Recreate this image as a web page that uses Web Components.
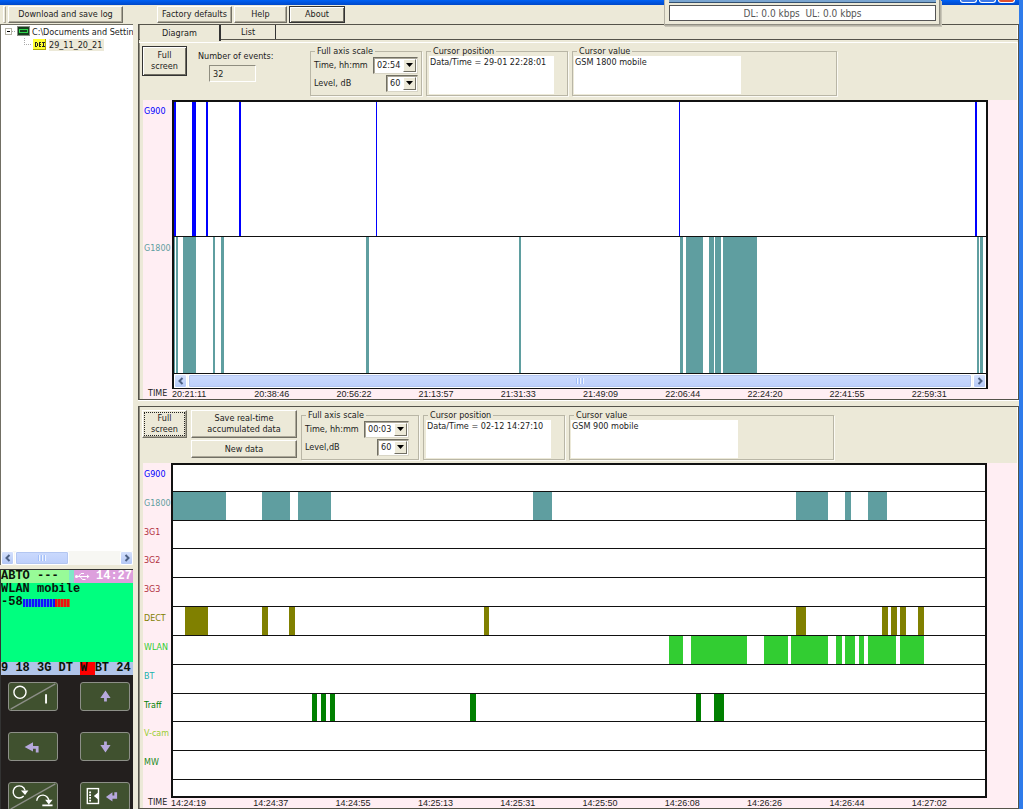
<!DOCTYPE html>
<html lang="en">
<head>
<meta charset="utf-8">
<title>Event log</title>
<style>
    html, body {
        height: 100%;
        margin: 0;
    }

    body {
        overflow: hidden;
        background: #ece9d8;
        color: #1c1c1c;
        font: 9px/10px "DejaVu Sans Condensed", "Liberation Sans", sans-serif;
    }
</style>
</head>
<body>
<log-app></log-app>

<script>
class BaseElement extends HTMLElement {
    constructor() {
        super();
        this.attachShadow({ mode: 'open' });
    }

    render(css, html) {
        this.shadowRoot.innerHTML = `<style>* { box-sizing: border-box; } ${css}</style>${html}`;
    }
}

class XpButton extends BaseElement {
    connectedCallback() {
        this.render(`
            :host {
                display: block;
            }

            button {
                display: block;
                width: 100%;
                height: 100%;
                margin: 0;
                padding: 0 1px;
                font: inherit;
                line-height: 11px;
                color: inherit;
                background: #ece9d8;
                border: 1px solid;
                border-color: #fff #716f64 #716f64 #fff;
                box-shadow: inset -1px -1px #aca899;
            }

            :host([kind="default"]) button {
                border: 1px solid #333;
                box-shadow: inset 1px 1px #fff, inset -1px -1px #716f64;
            }

            :host([kind="focused"]) button {
                outline: 1px dotted #222;
                outline-offset: -3px;
            }
        `, `<button type="button"><slot></slot></button>`);
    }
}

class XpGroup extends BaseElement {
    connectedCallback() {
        this.render(`
            :host {
                display: block;
            }

            fieldset {
                margin: 0;
                padding: 0 1px 1px;
                min-width: 0;
                height: 50px;
                border: 1px solid #b9b6a6;
                box-shadow: 1px 1px #fbfaf4;
            }

            legend {
                margin-left: 3px;
                padding: 0 2px;
                line-height: 10px;
            }
        `, `<fieldset><legend>${this.getAttribute('caption')}</legend><slot></slot></fieldset>`);
    }
}

class XpMemo extends BaseElement {
    connectedCallback() {
        this.render(`
            :host {
                display: block;
                height: 38px;
            }

            textarea {
                display: block;
                width: 100%;
                height: 100%;
                margin: 0;
                padding: 0 1px;
                border: 0;
                outline: 0;
                resize: none;
                overflow: hidden;
                background: #fff;
                color: inherit;
                font: inherit;
                line-height: 12px;
            }
        `, `<textarea readonly aria-label="${this.getAttribute('label')}">${this.getAttribute('value')}</textarea>`);
    }
}

class XpCombo extends BaseElement {
    connectedCallback() {
        this.render(`
            :host {
                display: flex;
                align-items: center;
                justify-content: space-between;
                height: 18px;
                padding: 0 2px;
            }

            .box {
                display: grid;
                grid-template-columns: 1fr 13px;
                width: 45px;
                height: 17px;
                background: #fff;
                border: 1px solid;
                border-color: #716f64 #d8d5c6 #d8d5c6 #716f64;
                box-shadow: inset 1px 1px #aca899;
                padding: 1px;
            }

            :host([short]) .box {
                width: 32px;
            }

            select {
                grid-area: 1 / 1 / 2 / 3;
                appearance: none;
                min-width: 0;
                margin: 0;
                padding: 0 0 0 2px;
                border: 0;
                outline: 0;
                background: none;
                color: inherit;
                font: inherit;
            }

            .arrow {
                grid-area: 1 / 2;
                pointer-events: none;
                display: grid;
                place-items: center;
                background: #ece9d8;
                border: 1px solid;
                border-color: #fff #716f64 #716f64 #fff;
            }
        `, `
            <label for="field">${this.getAttribute('label')}</label>
            <div class="box">
                <select id="field"><option>${this.getAttribute('value')}</option></select>
                <span class="arrow"><svg width="7" height="4"><path d="M0 0h7L3.5 4z" fill="#000"/></svg></span>
            </div>
        `);
    }
}

class XpScrollbar extends BaseElement {
    connectedCallback() {
        const arrow = (d) => `<svg width="8" height="8" viewBox="0 0 8 8"><path d="${d}" fill="none" stroke="#4d6185" stroke-width="2"/></svg>`;
        this.render(`
            :host {
                display: flex;
                gap: 1px;
                height: 14px;
                background: #f7f7f3;
            }

            button {
                display: grid;
                place-items: center;
                flex: none;
                width: 13px;
                margin: 0;
                padding: 0;
                border: 1px solid #fff;
                border-radius: 2px;
                background: linear-gradient(#d5e1fd, #b4c8f6);
            }

            .track {
                flex: 1;
            }

            .thumb {
                display: grid;
                place-items: center;
                width: var(--thumb, 100%);
                height: 100%;
                border: 1px solid #fff;
                border-radius: 2px;
                background: linear-gradient(#cbdafd, #bdcffb);
                box-shadow: inset 0 0 0 1px #b3c6f1;
            }
        `, `
            <button type="button" aria-label="Scroll left">${arrow('M5.5 1L2.5 4l3 3')}</button>
            <div class="track"><div class="thumb">
                <svg width="8" height="6"><path d="M1.5 0v6M4.5 0v6M7.5 0v6" stroke="#eef4fe"/><path d="M.5 0v6M3.5 0v6M6.5 0v6" stroke="#8cb0f8" stroke-opacity=".6"/></svg>
            </div></div>
            <button type="button" aria-label="Scroll right">${arrow('M2.5 1l3 3-3 3')}</button>
        `);
    }
}

const COLORS = {
    G900: '#0000ff',
    G1800: '#5f9ea0',
    '3G1': '#b03040',
    '3G2': '#b03040',
    '3G3': '#b03040',
    DECT: '#808000',
    WLAN: '#32cd32',
    BT: '#20b2aa',
    Traff: '#008000',
    'V-cam': '#9acd32',
    MW: '#228b22'
};

// Events are [start, length] pairs on an axis of SPAN units
const SPAN = 812;

const CHARTS = {
    log: {
        lanes: [
            ['G900', [[0, 2], [18, 4], [32, 2], [65, 2], [202, 1], [505, 1], [801, 2]]],
            ['G1800', [[0, 1], [2, 2], [9, 13], [39, 2], [47, 3], [192, 3], [345, 2], [506, 3], [512, 17],
                [535, 5], [541, 6], [549, 34], [803, 2], [806, 3]]]
        ],
        times: ['20:21:11', '20:38:46', '20:56:22', '21:13:57', '21:31:33', '21:49:09', '22:06:44', '22:24:20', '22:41:55', '22:59:31']
    },
    live: {
        lanes: [
            ['G900', []],
            ['G1800', [[0, 53], [89, 28], [125, 33], [360, 19], [623, 32], [672, 6], [695, 19]]],
            ['3G1', []],
            ['3G2', []],
            ['3G3', []],
            ['DECT', [[12, 23], [89, 6], [116, 6], [311, 5], [623, 10], [709, 6], [718, 6], [727, 6], [745, 6]]],
            ['WLAN', [[496, 14], [518, 56], [591, 24], [618, 37], [663, 6], [672, 10], [686, 5], [695, 28], [727, 24]]],
            ['BT', []],
            ['Traff', [[139, 5], [148, 5], [157, 5], [297, 6], [523, 5], [541, 10]]],
            ['V-cam', []],
            ['MW', []]
        ],
        times: ['14:24:19', '14:24:37', '14:24:55', '14:25:13', '14:25:31', '14:25:50', '14:26:08', '14:26:26', '14:26:44', '14:27:02']
    }
};

class EventChart extends BaseElement {
    connectedCallback() {
        const { lanes, times } = CHARTS[this.getAttribute('source')];
        const rows = lanes.map(([name, events]) => `
            <div class="lane">
                <span class="name" style="color: ${COLORS[name]}">${name}</span>
                <svg class="track" viewBox="0 0 ${SPAN} 1" preserveAspectRatio="none" fill="${COLORS[name]}" shape-rendering="crispEdges">
                    ${events.map(([x, w]) => `<rect x="${x}" width="${w}" height="1"/>`).join('')}
                </svg>
            </div>
        `).join('');

        this.render(`
            :host {
                --names: 28px;
                display: flex;
                flex-direction: column;
                min-height: 0;
                background: #ffeef3;
            }

            :host([scroll]) {
                --names: 29px;
            }

            .lane, .footer {
                display: grid;
                grid-template-columns: var(--names) minmax(0, 1fr);
                padding-right: 30px;
            }

            :host([scroll]) .lane, :host([scroll]) .footer {
                padding-right: 29px;
            }

            .lane {
                flex: 1;
                min-height: 0;
            }

            .name {
                padding: 7px 0 0 1px;
                font: 8px/10px "DejaVu Sans", sans-serif;
            }

            .track, .end {
                background: #fff;
                border: solid #111;
                border-width: 0 2px 1px;
            }

            .track {
                width: 100%;
                height: 100%;
            }

            .lane:first-of-type .track {
                border-top-width: 2px;
            }

            .end {
                grid-column: 2;
                min-height: 18px;
                border-bottom-width: 2px;
            }

            :host([scroll]) .end {
                min-height: 0;
                border-bottom-width: 1px;
            }

            .axis {
                display: grid;
                grid-template-columns: var(--names) minmax(0, 1fr);
                padding-right: 23px;
                font: 9px/10px "Liberation Sans", sans-serif;
            }

            .axis span:first-child {
                padding-left: 5px;
                font: 8px/10px "DejaVu Sans", sans-serif;
            }

            .times {
                display: grid;
                grid-template-columns: repeat(${times.length}, minmax(0, 1fr));
            }
        `, `
            ${rows}
            <div class="footer"><div class="end"><slot></slot></div></div>
            <div class="axis"><span>TIME</span><div class="times">${times.map((t) => `<time>${t}</time>`).join('')}</div></div>
        `);
    }
}

class LogTree extends BaseElement {
    connectedCallback() {
        this.render(`
            :host {
                display: flex;
                flex-direction: column;
                min-height: 0;
                background: #fff;
                border: solid #716f64;
                border-width: 1px 0 0 1px;
            }

            ul {
                flex: 1;
                margin: 0;
                padding: 0 0 0 3px;
                list-style: none;
                overflow: hidden;
            }

            ul ul {
                padding-left: 19px;
            }

            .row {
                display: flex;
                align-items: center;
                gap: 2px;
                height: 13px;
                white-space: nowrap;
            }

            ul ul .row {
                gap: 3px;
            }

            svg {
                flex: none;
            }

            .selected {
                padding: 1px 2px 1px 0;
                background: #ece9d8;
            }

            xp-scrollbar {
                --thumb: 52%;
            }
        `, `
            <ul>
                <li>
                    <div class="row">
                        <svg width="26" height="13" shape-rendering="crispEdges">
                            <path d="M8 6.5h4" stroke="#aaa" stroke-dasharray="1 1"/>
                            <rect x="1.5" y="3.5" width="6" height="6" fill="#fff" stroke="#b5b3a6"/>
                            <path d="M3 6.5h3" stroke="#000"/>
                            <rect x="13" y="1" width="13" height="10" fill="#8c9088"/>
                            <rect x="14" y="2" width="11" height="8" fill="#173f1e"/>
                            <path d="M15 4.5h9M16 7.5h7" stroke="#2fd84f"/>
                            <path d="M15.5 4v4M23.500 4v4" stroke="#2fd84f"/>
                        </svg>
                        <span>C:\\Documents and Settin</span>
                    </div>
                    <ul>
                        <li>
                            <div class="row">
                                <svg width="23" height="13" shape-rendering="crispEdges">
                                    <path d="M1.5 0v6M1 6.5h8" fill="none" stroke="#aaa" stroke-dasharray="1 1"/>
                                    <rect x="10" y="1" width="13" height="11" fill="#b0a800"/>
                                    <rect x="10" y="1" width="12" height="10" fill="#ffff30"/>
                                    <path d="M12.5 4v5M14.5 5v3M12 4.5h2M12 8.5h2M16 4.5h2M16.5 4v5M16 6.500h2M16 8.5h2M19 4.5h3M19 8.5h3M20.5 5v3" fill="none" stroke="#222"/>
                                </svg>
                                <span class="selected">29_11_20_21</span>
                            </div>
                        </li>
                    </ul>
                </li>
            </ul>
            <xp-scrollbar></xp-scrollbar>
        `);
    }
}

class DevicePanel extends BaseElement {
    connectedCallback() {
        const key = (label, art) => `<button type="button" aria-label="${label}"><svg width="50" height="29" viewBox="0 0 50 29">${art}</svg></button>`;
        this.render(`
            :host {
                display: flex;
                flex-direction: column;
                height: 240px;
                overflow: hidden;
                background: #231f1e;
                border-top: 1px solid #333;
                border-left: 1px solid #333;
            }

            .lcd {
                flex: none;
                background: #00ff7f;
                color: #0a140a;
                font: bold 12px/13px "Liberation Mono", monospace;
            }

            .status {
                display: grid;
                grid-template-columns: 68px 5px 1fr;
                background: #98fb98;
            }

            .gap {
                background: #7fe8c8;
            }

            .clock {
                display: flex;
                align-items: center;
                justify-content: space-between;
                padding: 0 1px;
                background: #dd9fdd;
                color: #fff;
            }

            .body {
                height: 79px;
            }

            .signal {
                display: flex;
                align-items: center;
            }

            .blue, .red {
                width: 32px;
                height: 8px;
                background: repeating-linear-gradient(90deg, #1010ff 0 2px, #20a0c0 2px 3px);
            }

            .red {
                width: 15px;
                background: repeating-linear-gradient(90deg, #f01010 0 2px, #a07030 2px 3px);
            }

            .bands {
                background: #b0c4e8;
                white-space: pre;
            }

            .bands mark {
                display: inline-block;
                background: #ff0000;
                color: inherit;
            }

            .keys {
                display: grid;
                grid-template-columns: 50px 50px;
                justify-content: space-between;
                gap: 21px 0;
                padding: 7px 3px 0 7px;
            }

            button {
                display: block;
                height: 29px;
                margin: 0;
                padding: 0;
                border: 0;
                background: none;
            }

            svg {
                display: block;
            }

            .keys svg {
                background: #40512f;
                border: 1px solid #8d8f88;
                border-radius: 3px;
            }
        `, `
            <div class="lcd">
                <div class="status"><span>ABTO ---</span><span class="gap"></span><span class="clock"><svg width="15" height="9" viewBox="0 0 15 9" fill="none" stroke="#fff"><path d="M1 4.5h12M3.5 4.5L6 1.5h3M5 4.5L7.5 7.5h3"/><path d="M12 2.5L14.5 4.5 12 6.5z" fill="#fff" stroke="none"/><circle cx="1.5" cy="4.5" r="1.5" fill="#fff" stroke="none"/></svg>14:27</span></div>
                <div class="body"><div>WLAN mobile</div><div class="signal">-58<span class="blue"></span><span class="red"></span></div></div>
                <div class="bands">9 18 3G DT <mark>W </mark>BT 24</div>
            </div>
            <div class="keys">
                ${key('Power', '<path d="M1 28L49 1" stroke="#8d8f88" stroke-width="1.5"/><circle cx="11" cy="10" r="6.5" fill="none" stroke="#fff" stroke-width="1.5"/><path d="M39 12v10" stroke="#fff" stroke-width="2"/>')}
                ${key('Up', '<path d="M25.5 8l5.5 8h-4v4h-3v-4h-4z" fill="#b6a8dc"/>')}
                ${key('Back', '<path d="M16 15l9-5v4h6v7h-3v-4h-3v3z" fill="#b6a8dc"/>')}
                ${key('Down', '<path d="M25.5 21l5.5-8h-4V9h-3v4h-4z" fill="#b6a8dc"/>')}
                ${key('Repeat', '<path d="M1 28L49 1" stroke="#8d8f88" stroke-width="1.5"/><path d="M15 14a6.5 6.5 0 1 1 1.5-6" fill="none" stroke="#fff" stroke-width="1.5"/><path d="M12 8h8l-3.5 5z" fill="#fff"/><path d="M29 19a6.5 6.5 0 0 1 13 1" fill="none" stroke="#fff" stroke-width="1.5"/><path d="M38 18h8l-4 5zM35 23h11v2H35z" fill="#fff"/>')}
                ${key('Menu enter', '<rect x="6" y="6" width="12" height="16" fill="none" stroke="#fff" stroke-width="1.5"/><path d="M8 9h2v2H8zM8 12h2v2H8zM8 15h2v2H8zM8 18h2v2H8zM18 10v8l-5-4z" fill="#fff"/><path d="M26 15l7-5v3.5h2V10h3v7h-5v3z" fill="#b6a8dc"/>')}
            </div>
        `);
    }
}

class TrafficMeter extends BaseElement {
    connectedCallback() {
        this.render(`
            :host {
                display: block;
                width: 277px;
                padding: 0 4px 4px;
                background: #ece9d8;
                border: 1px solid #b5b2a4;
                border-top: 0;
                box-shadow: inset -1px -1px #8f8d82, 1px 1px #c9c6b8;
            }

            .cap {
                height: 3px;
                margin-bottom: 2px;
                background: #7aa5d0;
                border-bottom: 1px solid #33506e;
            }

            .value {
                height: 16px;
                border: 1px solid #555;
                background: #fff;
                color: #555;
                font-size: 10px;
                line-height: 15px;
                text-align: center;
                white-space: pre;
            }
        `, `<div class="cap"></div><div class="value">DL: 0.0 kbps  UL: 0.0 kbps</div>`);
    }
}

class LogApp extends BaseElement {
    connectedCallback() {
        this.render(`
            :host {
                display: flex;
                flex-direction: column;
                height: 100vh;
                border-right: 4px solid #2f7bea;
            }

            .title {
                display: flex;
                justify-content: flex-end;
                gap: 2px;
                height: 5px;
                padding-right: 4px;
                background: linear-gradient(#0061f5, #0048c8);
            }

            .title button {
                width: 17px;
                height: 3px;
                margin: 0;
                padding: 0;
                border: 1px solid #fff;
                border-top: 0;
                border-radius: 0 0 3px 3px;
                background: #3c78e8;
            }

            .title .close {
                background: #e05030;
            }

            .toolbar {
                display: flex;
                height: 19px;
                padding: 1px 0 1px 3px;
                gap: 2px;
            }

            .grip {
                width: 3px;
                border: 1px solid;
                border-color: #fff #aca899 #aca899 #fff;
            }

            .download {
                width: 115px;
                margin-right: 32px;
            }

            .defaults {
                width: 75px;
            }

            .help {
                width: 53px;
            }

            .about {
                width: 56px;
            }

            .work {
                flex: 1;
                min-height: 0;
                display: grid;
                grid-template-columns: 133px minmax(0, 1fr);
                column-gap: 5px;
            }

            .side {
                display: flex;
                flex-direction: column;
                gap: 4px;
                min-height: 0;
            }

            log-tree {
                flex: 1;
            }

            .panels {
                display: grid;
                grid-template-rows: minmax(0, 376fr) minmax(0, 403fr);
                row-gap: 6px;
                min-height: 0;
            }

            .panel {
                display: flex;
                flex-direction: column;
                min-height: 0;
                border: 1px solid #55534a;
                box-shadow: inset 1px 0 #8f8d80, inset -1px 0 #fff, 0 1px #fff;
            }

            .tabs {
                display: flex;
                height: 18px;
                padding-left: 1px;
                border-bottom: 1px solid #fff;
                box-shadow: inset 0 -2px #ece9d8, inset 0 -3px #55534a;
            }

            .tabs button {
                width: 55px;
                height: 14px;
                margin: 0;
                padding: 0;
                border: 0;
                border-right: 1px solid #333;
                background: #ece9d8;
                font: inherit;
                color: inherit;
            }

            .tabs .current {
                width: 81px;
                height: 16px;
                border-right-width: 2px;
            }

            .controls {
                flex: none;
                display: flex;
                align-items: flex-start;
                gap: 4px;
                height: 57px;
                padding: 3px 0 0 3px;
            }

            .live .controls {
                height: 56px;
            }

            .full {
                width: 45px;
                height: 30px;
            }

            .live .full {
                height: 28px;
            }

            .events {
                width: 115px;
                padding: 5px 0 0 7px;
            }

            .events input {
                display: block;
                width: 47px;
                height: 17px;
                margin: 4px 0 0 11px;
                padding: 0 3px;
                border: 1px solid;
                border-color: #8f8d80 #fff #fff #8f8d80;
                background: #ece9d8;
                color: inherit;
                font: inherit;
            }

            .actions {
                display: grid;
                grid-template-rows: 28px 18px;
                gap: 2px;
                width: 106px;
            }

            .scale {
                width: 112px;
            }

            .live .scale {
                width: 118px;
            }

            .live xp-combo {
                margin-right: 6px;
            }

            .position {
                width: 142px;
            }

            .position xp-memo {
                width: 125px;
                margin-left: 1px;
            }

            .value {
                width: 265px;
            }

            .value xp-memo {
                width: 167px;
            }

            event-chart {
                flex: 1;
                margin: 0 1px 0 4px;
            }

            traffic-meter {
                position: absolute;
                top: 0;
                right: 82px;
            }
        `, `
            <div class="title">
                <button type="button" aria-label="Minimize"></button>
                <button type="button" aria-label="Maximize"></button>
                <button type="button" class="close" aria-label="Close"></button>
            </div>
            <div class="toolbar">
                <span class="grip"></span>
                <xp-button class="download">Download and save log</xp-button>
                <xp-button class="defaults">Factory defaults</xp-button>
                <xp-button class="help">Help</xp-button>
                <xp-button class="about" kind="default">About</xp-button>
            </div>
            <div class="work">
                <div class="side">
                    <log-tree></log-tree>
                    <device-panel></device-panel>
                </div>
                <div class="panels">
                    <section class="panel">
                        <div class="tabs" role="tablist">
                            <button type="button" role="tab" aria-selected="true" class="current">Diagram</button>
                            <button type="button" role="tab">List</button>
                        </div>
                        <div class="controls">
                            <xp-button class="full" kind="default">Full screen</xp-button>
                            <div class="events">
                                <label for="events">Number of events:</label>
                                <input id="events" value="32" readonly>
                            </div>
                            <xp-group class="scale" caption="Full axis scale">
                                <xp-combo label="Time, hh:mm" value="02:54"></xp-combo>
                                <xp-combo label="Level, dB" value="60" short></xp-combo>
                            </xp-group>
                            <xp-group class="position" caption="Cursor position">
                                <xp-memo label="Cursor position" value="Data/Time = 29-01 22:28:01"></xp-memo>
                            </xp-group>
                            <xp-group class="value" caption="Cursor value">
                                <xp-memo label="Cursor value" value="GSM 1800 mobile"></xp-memo>
                            </xp-group>
                        </div>
                        <event-chart source="log" scroll><xp-scrollbar></xp-scrollbar></event-chart>
                    </section>
                    <section class="panel live">
                        <div class="controls">
                            <xp-button class="full" kind="focused">Full screen</xp-button>
                            <div class="actions">
                                <xp-button>Save real-time accumulated data</xp-button>
                                <xp-button>New data</xp-button>
                            </div>
                            <xp-group class="scale" caption="Full axis scale">
                                <xp-combo label="Time, hh:mm" value="00:03"></xp-combo>
                                <xp-combo label="Level,dB" value="60" short></xp-combo>
                            </xp-group>
                            <xp-group class="position" caption="Cursor position">
                                <xp-memo label="Cursor position" value="Data/Time = 02-12 14:27:10"></xp-memo>
                            </xp-group>
                            <xp-group class="value" caption="Cursor value">
                                <xp-memo label="Cursor value" value="GSM 900 mobile"></xp-memo>
                            </xp-group>
                        </div>
                        <event-chart source="live"></event-chart>
                    </section>
                </div>
            </div>
            <traffic-meter></traffic-meter>
        `);
    }
}

customElements.define('xp-button', XpButton);
customElements.define('xp-group', XpGroup);
customElements.define('xp-memo', XpMemo);
customElements.define('xp-combo', XpCombo);
customElements.define('xp-scrollbar', XpScrollbar);
customElements.define('event-chart', EventChart);
customElements.define('log-tree', LogTree);
customElements.define('device-panel', DevicePanel);
customElements.define('traffic-meter', TrafficMeter);
customElements.define('log-app', LogApp);
</script>
</body>
</html>
